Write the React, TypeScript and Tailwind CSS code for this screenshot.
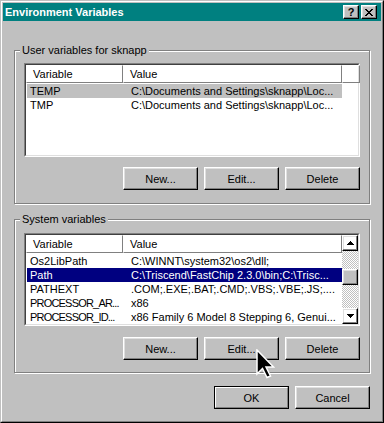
import React from 'react';

const raised =
  'border border-t-white border-l-white border-r-black border-b-black shadow-[inset_-1px_-1px_#808080,inset_1px_1px_#dfdfdf]';

const Button = ({ label, isDefault }: { label: string; isDefault?: boolean }) =>
  isDefault ? (
    <div className="w-[75px] h-[23px] border border-black">
      <div className="h-full flex items-center justify-center border border-t-white border-l-white border-r-[#808080] border-b-[#808080]">
        {label}
      </div>
    </div>
  ) : (
    <div className={`w-[75px] h-[23px] flex items-center justify-center ${raised}`}>{label}</div>
  );

const GroupBox = ({ title, className, children }: { title: string; className?: string; children: React.ReactNode }) => (
  <div className={`relative border border-[#808080] shadow-[inset_1px_1px_white,1px_1px_white] px-[9px] ${className ?? ''}`}>
    <span className="absolute -top-[8px] left-[5px] px-[2px] bg-[#c0c0c0] leading-[14px]">{title}</span>
    {children}
  </div>
);

const HeaderCell = ({ label, w }: { label?: string; w: string }) => (
  <div className={`${w} h-[18px] shrink-0 flex items-center pl-[6px] border border-t-white border-l-white border-r-[#808080] border-b-[#808080]`}>
    {label}
  </div>
);

type Row = { name: string; value: string };

const Rows = ({ rows, selected, active }: { rows: Row[]; selected: number; active?: boolean }) => (
  <div className="flex flex-col pt-px">
    {rows.map((r, i) => {
      const sel = i === selected;
      const cls = sel ? (active ? 'bg-[#000080] text-white' : 'bg-[#c0c0c0]') : '';
      // long names are already cut with "..." in the original, squeeze them a bit
      const squeeze = r.name.endsWith('...') ? 'tracking-[-0.8px]' : '';
      return (
        <div key={r.name} className={`flex h-[14px] ml-px w-[315px] items-center whitespace-nowrap ${cls}`}>
          <div className={`w-[96px] shrink-0 pl-[3px] ${squeeze}`}>{r.name}</div>
          <div className="w-[219px] pl-[8px] overflow-hidden">{r.value}</div>
        </div>
      );
    })}
  </div>
);

const Header = ({ filler }: { filler?: boolean }) => (
  <div className="flex">
    <HeaderCell label="Variable" w="w-[97px]" />
    <HeaderCell label="Value" w="w-[219px]" />
    {filler && <HeaderCell w="w-[18px]" />}
  </div>
);

const Triangle = ({ down }: { down?: boolean }) => (
  <svg width="7" height="4" viewBox="0 0 7 4" shapeRendering="crispEdges">
    {down ? <polygon points="0,0 7,0 3.5,4" fill="black" /> : <polygon points="3.5,0 7,4 0,4" fill="black" />}
  </svg>
);

const Scrollbar = () => (
  <div className="w-[16px] flex flex-col">
    <div className={`h-[16px] flex items-center justify-center ${raised}`}>
      <Triangle />
    </div>
    <div className="flex-1 bg-[repeating-conic-gradient(#c0c0c0_0_25%,#ffffff_0_50%)] bg-[length:2px_2px]">
      <div className={`h-[16px] mt-[18px] bg-[#c0c0c0] ${raised}`} />
    </div>
    <div className={`h-[16px] flex items-center justify-center ${raised}`}>
      <Triangle down />
    </div>
  </div>
);

const sunken =
  'border border-t-[#808080] border-l-[#808080] border-r-white border-b-white bg-white';

const userRows: Row[] = [
  { name: 'TEMP', value: 'C:\\Documents and Settings\\sknapp\\Loc...' },
  { name: 'TMP', value: 'C:\\Documents and Settings\\sknapp\\Loc...' },
];

const sysRows: Row[] = [
  { name: 'Os2LibPath', value: 'C:\\WINNT\\system32\\os2\\dll;' },
  { name: 'Path', value: 'C:\\Triscend\\FastChip 2.3.0\\bin;C:\\Trisc...' },
  { name: 'PATHEXT', value: '.COM;.EXE;.BAT;.CMD;.VBS;.VBE;.JS;....' },
  { name: 'PROCESSOR_AR...', value: 'x86' },
  { name: 'PROCESSOR_ID...', value: 'x86 Family 6 Model 8 Stepping 6, Genui...' },
];

const CloseGlyph = () => (
  <svg width="8" height="7" viewBox="0 0 8 7" shapeRendering="crispEdges">
    <path
      d="M0 0h2v1h-2zM6 0h2v1h-2zM1 1h2v1h-2zM5 1h2v1h-2zM2 2h4v1h-4zM3 3h2v1h-2zM2 4h4v1h-4zM1 5h2v1h-2zM5 5h2v1h-2zM0 6h2v1h-2zM6 6h2v1h-2z"
      fill="black"
    />
  </svg>
);

const Cursor = () => (
  <svg className="absolute left-[255px] top-[348px]" width="19" height="30" viewBox="0 0 19 30">
    <path
      d="M1 1 L1 25 L6.5 19.5 L11 28.5 L14.5 27 L10 18 L17.5 18 Z"
      fill="black"
      stroke="white"
      strokeWidth="1.5"
      strokeLinejoin="miter"
    />
  </svg>
);

export default function App() {
  return (
    <div className="relative w-[384px] h-[423px] bg-[#c0c0c0] border border-t-[#c0c0c0] border-l-[#c0c0c0] border-r-black border-b-black font-['Liberation_Sans',Arial,sans-serif] text-[11px] leading-[14px] text-black">
      <div className="h-full flex flex-col p-px border border-t-white border-l-white border-r-[#808080] border-b-[#808080]">
        <div className="h-[18px] shrink-0 bg-[#008080] flex items-center pl-[2px] pr-[4px]">
          <span className="text-white font-bold text-[11px]">Environment Variables</span>
          <div className="ml-auto flex gap-[2px]">
            <div className={`w-[16px] h-[14px] flex items-center justify-center font-bold bg-[#c0c0c0] ${raised}`}>
              ?
            </div>
            <div className={`w-[16px] h-[14px] flex items-center justify-center bg-[#c0c0c0] ${raised}`}>
              <CloseGlyph />
            </div>
          </div>
        </div>

        <div className="flex-1 px-[11px] flex flex-col">
          <GroupBox title="User variables for sknapp" className="mt-[29px] pt-[12px] pb-[13px]">
            <div className={`h-[94px] ${sunken}`}>
              <div className="h-full border border-t-[#404040] border-l-[#404040] border-r-[#dfdfdf] border-b-[#dfdfdf]">
                <Header filler />
                <Rows rows={userRows} selected={0} />
              </div>
            </div>
            <div className="flex justify-end gap-[6px] mt-[10px]">
              <Button label="New..." />
              <Button label="Edit..." />
              <Button label="Delete" />
            </div>
          </GroupBox>

          <GroupBox title="System variables" className="mt-[15px] pt-[13px] pb-[12px]">
            <div className={`h-[93px] ${sunken}`}>
              <div className="h-full flex border border-t-[#404040] border-l-[#404040] border-r-[#dfdfdf] border-b-[#dfdfdf]">
                <div className="flex-1 overflow-hidden">
                  <Header />
                  <Rows rows={sysRows} selected={1} active />
                </div>
                <Scrollbar />
              </div>
            </div>
            <div className="flex justify-end gap-[6px] mt-[11px]">
              <Button label="New..." />
              <Button label="Edit..." />
              <Button label="Delete" />
            </div>
          </GroupBox>

          <div className="flex justify-end gap-[6px] mt-[13px]">
            <Button label="OK" isDefault />
            <Button label="Cancel" />
          </div>
        </div>
      </div>
      <Cursor />
    </div>
  );
}
